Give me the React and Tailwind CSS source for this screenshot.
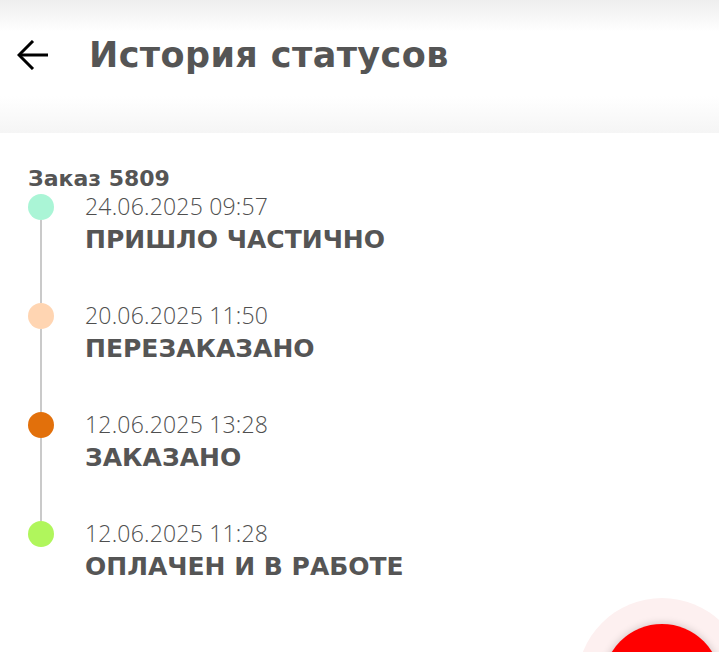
import React from 'react';

const statuses = [
  { date: '24.06.2025 09:57', name: 'ПРИШЛО ЧАСТИЧНО', color: 'bg-[#aaf5d6]' },
  { date: '20.06.2025 11:50', name: 'ПЕРЕЗАКАЗАНО', color: 'bg-[#ffd5b2]' },
  { date: '12.06.2025 13:28', name: 'ЗАКАЗАНО', color: 'bg-[#e2700b]' },
  { date: '12.06.2025 11:28', name: 'ОПЛАЧЕН И В РАБОТЕ', color: 'bg-[#b0f65c]' },
];

const BackArrow = () => (
  <svg width="32" height="30" viewBox="0 0 32 30" fill="none" stroke="#000" strokeWidth="3">
    <path d="M2 15H31" />
    <path d="M16 1L2 15L16 29" />
  </svg>
);

const App = () => {
  return (
    <div className="relative w-[719px] h-[652px] overflow-hidden bg-white font-['DejaVu_Sans',sans-serif] text-[#555555]">
      {/* header */}
      <div className="h-[133px] flex items-center pb-[24px] bg-[linear-gradient(to_bottom,#eeeeee_0px,#ffffff_32px,#ffffff_96px,#f5f5f5_133px)]">
        <button className="ml-[17px] flex items-center">
          <BackArrow />
        </button>
        <h1 className="ml-[40px] text-[35px] font-bold tracking-[0.4px] leading-[40px]">История статусов</h1>
      </div>

      {/* body */}
      <div className="pl-[28px] pt-[34px]">
        <div className="text-[22px] font-bold leading-[24px]">Заказ 5809</div>
        <div className="mt-[3px]">
          {statuses.map((s, i) => (
            <div key={i} className="flex h-[109px]">
              <div className="w-[26px] flex flex-col items-center">
                <div className={`w-[26px] h-[26px] rounded-full shrink-0 ${s.color}`} />
                {i < statuses.length - 1 && <div className="w-[2px] flex-1 bg-[#cacaca]" />}
              </div>
              <div className="ml-[31px] -mt-[3px]">
                <div className="font-['Open_Sans',sans-serif] font-light text-[23px] leading-[30px] tracking-[0.2px] text-[#4f4f4f]">{s.date}</div>
                <div className="text-[25px] font-bold leading-[30px] mt-[4px]">{s.name}</div>
              </div>
            </div>
          ))}
        </div>
      </div>

      {/* floating button */}
      <div className="absolute left-[577px] top-[598px] w-[170px] h-[170px] rounded-full bg-[#fdf0f0] flex items-center justify-center">
        <div className="w-[118px] h-[118px] rounded-full bg-[#ff0000] shadow-[0_0_8px_rgba(0,0,0,0.2)]" />
      </div>
    </div>
  );
};

export default App;
